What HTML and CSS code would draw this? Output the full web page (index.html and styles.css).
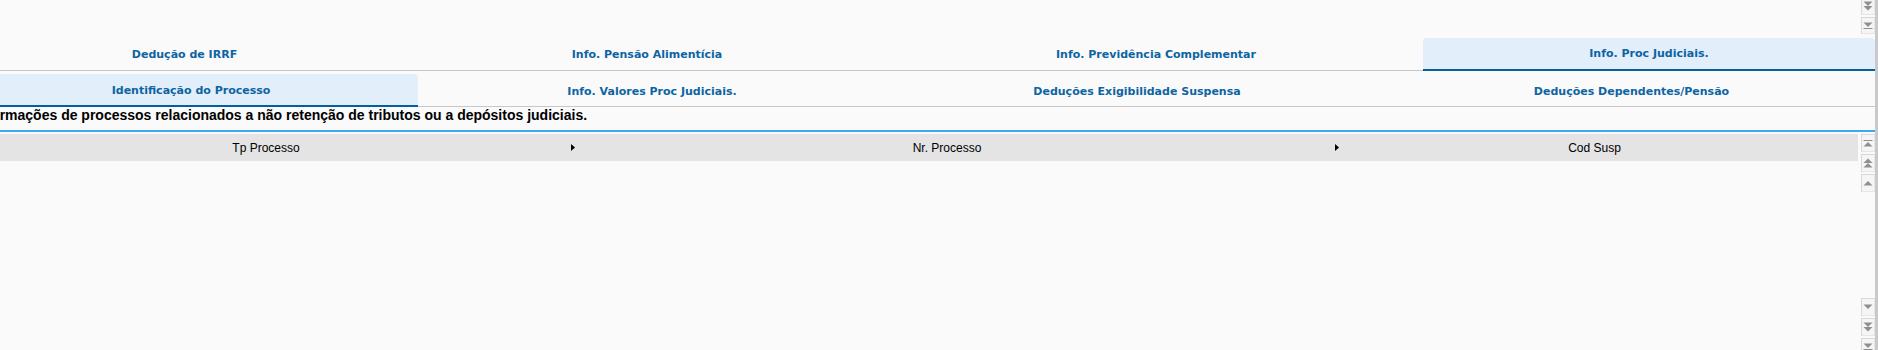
FILE: index.html
```html
<!DOCTYPE html>
<html lang="pt-BR">
<head>
    <meta charset="UTF-8">
    <meta name="viewport" content="width=device-width, initial-scale=1.0">
    <title>Info. Proc Judiciais</title>
    <link rel="stylesheet" href="styles.css">
</head>
<body>
    <div class="screen">
        <div class="main">
            <!-- bottom of the grid above, only its move buttons are in view -->
            <section class="top-pane">
                <div class="nav-col nav-end">
                    <button class="nav-btn" title="Próxima página">
                        <svg width="14" height="17" viewBox="0 0 14 17"><polygon points="2.5,3.5 11.5,3.5 7,8" /><polygon points="2.5,8 11.5,8 7,12.5" /></svg>
                    </button>
                    <button class="nav-btn" title="Último">
                        <svg width="14" height="17" viewBox="0 0 14 17"><polygon points="2.5,5.5 11.5,5.5 7,10" /><rect x="2.5" y="11" width="9" height="1" /></svg>
                    </button>
                </div>
            </section>

            <nav class="tabs tabs-main">
                <div class="tab t-irrf">Dedução de IRRF</div>
                <div class="tab t-pensao">Info. Pensão Alimentícia</div>
                <div class="tab t-prev">Info. Previdência Complementar</div>
                <div class="tab t-proc active">Info. Proc Judiciais.</div>
            </nav>

            <nav class="tabs tabs-sub">
                <div class="tab s-ident active">Identificação do Processo</div>
                <div class="tab s-valores">Info. Valores Proc Judiciais.</div>
                <div class="tab s-exig">Deduções Exigibilidade Suspensa</div>
                <div class="tab s-dep">Deduções Dependentes/Pensão</div>
            </nav>

            <p class="desc">Informações de processos relacionados a não retenção de tributos ou a depósitos judiciais.</p>

            <section class="grid">
                <div class="grid-body">
                    <div class="grid-head">
                        <div class="col c-tp">Tp Processo</div>
                        <div class="sort s1"><svg width="4" height="7" viewBox="0 0 4 7"><polygon points="0,0 4,3.5 0,7" /></svg></div>
                        <div class="col c-nr">Nr. Processo</div>
                        <div class="sort s2"><svg width="4" height="7" viewBox="0 0 4 7"><polygon points="0,0 4,3.5 0,7" /></svg></div>
                        <div class="col c-cod">Cod Susp</div>
                    </div>
                </div>
                <div class="nav-col">
                    <div class="nav-group">
                        <button class="nav-btn" title="Primeiro">
                            <svg width="14" height="18" viewBox="0 0 14 18"><rect x="2.5" y="6" width="9" height="1" /><polygon points="2.5,12.5 11.5,12.5 7,8" /></svg>
                        </button>
                        <button class="nav-btn" title="Página anterior">
                            <svg width="14" height="18" viewBox="0 0 14 18"><polygon points="2.5,9 11.5,9 7,4.5" /><polygon points="2.5,13.5 11.5,13.5 7,9" /></svg>
                        </button>
                        <button class="nav-btn" title="Anterior">
                            <svg width="14" height="18" viewBox="0 0 14 18"><polygon points="2.5,11.5 11.5,11.5 7,7" /></svg>
                        </button>
                    </div>
                    <div class="nav-group">
                        <button class="nav-btn" title="Próximo">
                            <svg width="14" height="18" viewBox="0 0 14 18"><polygon points="2.5,6.5 11.5,6.5 7,11" /></svg>
                        </button>
                        <button class="nav-btn" title="Próxima página">
                            <svg width="14" height="18" viewBox="0 0 14 18"><polygon points="2.5,4.5 11.5,4.5 7,9" /><polygon points="2.5,9 11.5,9 7,13.5" /></svg>
                        </button>
                        <button class="nav-btn" title="Último">
                            <svg width="14" height="18" viewBox="0 0 14 18"><polygon points="2.5,5.5 11.5,5.5 7,10" /><rect x="2.5" y="11" width="9" height="1" /></svg>
                        </button>
                    </div>
                </div>
            </section>
        </div>
        <div class="edge"></div>
    </div>
</body>
</html>
```

FILE: styles.css
```css
body {
    margin: 0;
    background: #fafafa;
    font-family: 'DejaVu Sans', Verdana, sans-serif;
    overflow: hidden;
}
.screen {
    display: flex;
    height: 350px;
}
.main {
    flex: 1;
    min-width: 0;
    overflow: hidden;
}
.edge {
    width: 3px;
    background: #c9c9c9;
}

/* page move buttons */
.top-pane {
    height: 38px;
    display: flex;
    justify-content: flex-end;
    overflow: hidden;
}
.nav-col {
    width: 14px;
    flex: none;
    display: flex;
    flex-direction: column;
    justify-content: space-between;
}
.nav-col.nav-end {
    justify-content: flex-end;
    gap: 2px;
    padding-bottom: 4px;
}
.nav-group {
    display: flex;
    flex-direction: column;
    gap: 2px;
}
.nav-btn {
    box-sizing: border-box;
    width: 14px;
    height: 18px;
    padding: 0;
    margin: 0;
    border: 1px solid #d8d8d8;
    border-right-color: #e6e6e6;
    border-bottom-color: #e6e6e6;
    background: #f5f5f5;
    display: flex;
    align-items: center;
    justify-content: center;
    flex: none;
    overflow: hidden;
}
.nav-end .nav-btn {
    height: 17px;
}
.nav-btn svg {
    display: block;
    flex: none;
    fill: #8f8f8f;
}

/* tabs */
.tabs {
    display: flex;
    margin-left: -36px;
    height: 33px;
}
.tabs-sub {
    margin-top: 3px;
}
.tab {
    flex: none;
    box-sizing: border-box;
    display: flex;
    align-items: center;
    justify-content: center;
    font-size: 11px;
    font-weight: bold;
    color: #0d64a2;
    white-space: nowrap;
    border-bottom: 1px solid #c8c8c8;
}
.tabs-sub .tab {
    padding-top: 2px;
}
.tab.active {
    background: #e2eefa;
    border-bottom: 2px solid #00619d;
    border-radius: 4px 4px 0 0;
}
.t-irrf { width: 441px; }
.t-pensao { width: 484px; }
.t-prev { width: 534px; }
.t-proc { width: 452px; }
.s-ident { width: 454px; }
.s-valores { width: 468px; }
.s-exig { width: 502px; }
.s-dep { width: 487px; }

.desc {
    margin: 0 0 0 -36px;
    padding-left: 10px;
    height: 23px;
    line-height: 27px;
    font: bold 14px 'Liberation Sans', Arial, sans-serif;
    color: #000;
    white-space: nowrap;
    border-bottom: 2px solid #3ea8f2;
}

/* browse */
.grid {
    margin-top: 2px;
    height: 222px;
    display: flex;
    gap: 3px;
}
.grid-body {
    flex: 1;
    margin-left: -36px;
}
.grid-head {
    display: flex;
    align-items: center;
    height: 27px;
    background: #e4e4e4;
    font-size: 12px;
    font-family: 'Liberation Sans', Arial, sans-serif;
    color: #000;
}
.col {
    flex: none;
    text-align: center;
    white-space: nowrap;
}
.c-tp { width: 604px; }
.c-nr { width: 738px; }
.c-cod { width: 507px; }
.sort {
    flex: none;
    display: flex;
    justify-content: flex-end;
}
.sort svg {
    display: block;
    fill: #000;
}
.s1 { width: 10px; padding-right: 3px; box-sizing: border-box; }
.s2 { width: 25px; padding-right: 2px; box-sizing: border-box; }
```
